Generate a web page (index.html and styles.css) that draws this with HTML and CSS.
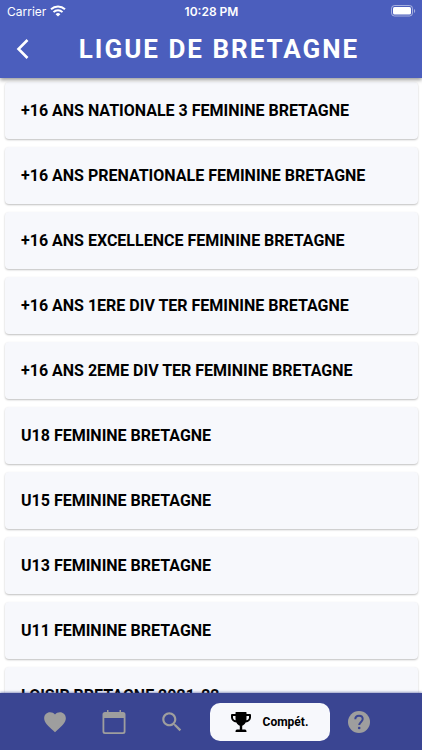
FILE: index.html
```html
<!DOCTYPE html>
<html lang="fr">
<head>
    <meta charset="UTF-8">
    <meta name="viewport" content="width=device-width, initial-scale=1.0">
    <title>Ligue de Bretagne</title>
    <link rel="stylesheet" href="styles.css">
</head>
<body>
    <header class="header">
        <div class="status-bar">
            <div class="carrier">
                <span>Carrier</span>
                <svg width="16" height="12" viewBox="0 0 16 12" fill="none" stroke="#fff" stroke-width="2">
                    <path d="M1 4.3a10.2 10.2 0 0 1 14 0"/>
                    <path d="M3.5 7.1a6.5 6.5 0 0 1 9 0"/>
                    <path d="M8 11.6L5.6 9.2a3.5 3.5 0 0 1 4.8 0z" fill="#fff" stroke="none"/>
                </svg>
            </div>
            <div class="time">10:28 PM</div>
            <div class="battery">
                <svg width="25" height="12" viewBox="0 0 25 12">
                    <rect x="0.5" y="0.5" width="21" height="10.5" rx="3" fill="none" stroke="#fff" stroke-opacity=".5"/>
                    <rect x="2" y="2" width="18" height="7.5" rx="1.5" fill="#fff"/>
                    <path d="M23 4v4c1.6-.8 1.6-3.2 0-4z" fill="#fff" fill-opacity=".5"/>
                </svg>
            </div>
        </div>
        <div class="title-bar">
            <button class="back" aria-label="Retour">
                <svg width="14" height="20" viewBox="0 0 14 20" fill="none" stroke="#fff" stroke-width="2.6">
                    <path d="M11.5 1L2.500 10l9 9"/>
                </svg>
            </button>
            <h1>LIGUE DE BRETAGNE</h1>
        </div>
    </header>

    <main class="list">
        <a class="card" href="#">+16 ANS NATIONALE 3 FEMININE BRETAGNE</a>
        <a class="card" href="#">+16 ANS PRENATIONALE FEMININE BRETAGNE</a>
        <a class="card" href="#">+16 ANS EXCELLENCE FEMININE BRETAGNE</a>
        <a class="card" href="#">+16 ANS 1ERE DIV TER FEMININE BRETAGNE</a>
        <a class="card" href="#">+16 ANS 2EME DIV TER FEMININE BRETAGNE</a>
        <a class="card" href="#">U18 FEMININE BRETAGNE</a>
        <a class="card" href="#">U15 FEMININE BRETAGNE</a>
        <a class="card" href="#">U13 FEMININE BRETAGNE</a>
        <a class="card" href="#">U11 FEMININE BRETAGNE</a>
        <a class="card" href="#">LOISIR BRETAGNE 2021-22</a>
    </main>

    <nav class="tabs">
        <a class="tab" href="#" aria-label="Favoris">
            <svg width="26" height="26" viewBox="0 0 24 24"><path d="M12 21.35l-1.45-1.32C5.4 15.36 2 12.28 2 8.5 2 5.42 4.42 3 7.5 3c1.74 0 3.41.81 4.5 2.09C13.09 3.81 14.76 3 16.5 3 19.58 3 22 5.42 22 8.5c0 3.78-3.4 6.86-8.55 11.54L12 21.35z"/></svg>
        </a>
        <a class="tab" href="#" aria-label="Calendrier">
            <svg width="26" height="26" viewBox="0 0 26 26"><path d="M4 3h2V1h1.5v2h11V1H20v2h2a2.5 2.5 0 0 1 2.5 2.5v17A2.5 2.5 0 0 1 22 25H4a2.5 2.5 0 0 1-2.5-2.5v-17A2.5 2.5 0 0 1 4 3zM3.3 9v13.200a1 1 0 0 0 1 1h17.400a1 1 0 0 0 1-1V9z" fill-rule="evenodd"/></svg>
        </a>
        <a class="tab" href="#" aria-label="Recherche">
            <svg width="26" height="26" viewBox="0 0 24 24"><path d="M15.5 14h-.79l-.28-.27C15.41 12.59 16 11.11 16 9.5 16 5.91 13.09 3 9.5 3S3 5.91 3 9.5 5.91 16 9.5 16c1.61 0 3.09-.59 4.23-1.57l.27.28v.79l5 4.99L20.49 19l-4.99-5zm-6 0C7.01 14 5 11.99 5 9.5S7.01 5 9.5 5 14 7.01 14 9.5 11.99 14 9.5 14z"/></svg>
        </a>
        <a class="tab tab-active" href="#">
            <svg width="20" height="20" viewBox="0 0 20 20" fill-rule="evenodd">
                <path d="M5 0h10q.5 0 .5.5V2H19q1 0 1 1v2.5c0 2.7-2.2 4.6-5.4 5-.9 1.700-2 2.700-3.400 3.200V17.500H14q1.500 0 1.500 2v.5h-11v-.5q0-2 1.500-2h2.800v-3.800C7.400 13.200 6.300 12.200 5.400 10.500 2.200 10.100 0 8.200 0 5.500V3q0-1 1-1h3.500V.5Q4.500 0 5 0zM2 4v1.500c0 1.400.9 2.400 2.600 2.800C4.500 7 4.500 5.500 4.500 4zM18 4h-2.500c0 1.500 0 3-.1 4.300C17.100 7.900 18 6.900 18 5.500z"/>
            </svg>
            <span>Compét.</span>
        </a>
        <a class="tab" href="#" aria-label="Aide">
            <svg width="22" height="22" viewBox="0 0 22 22">
                <circle cx="11" cy="11" r="11"/>
                <path class="mark" d="M7.300 8.300c0-2.300 1.600-3.500 3.700-3.500s3.700 1.300 3.700 3.300c0 2.800-3.500 2.900-3.500 6"/>
                <circle class="dot" cx="11.200" cy="17" r="1.300"/>
            </svg>
        </a>
    </nav>
</body>
</html>
```
FILE: styles.css
```css
* {
    box-sizing: border-box;
}
body {
    margin: 0;
    height: 100vh;
    display: flex;
    flex-direction: column;
    background-color: #fff;
    font-family: Roboto, sans-serif;
    overflow: hidden;
}
a {
    color: inherit;
    text-decoration: none;
}
svg {
    display: block;
}

/* header */
.header {
    flex: none;
    background-color: #4b5ebd;
    color: #fff;
    box-shadow: 0 2px 4px rgba(0, 0, 0, 0.4);
    z-index: 1;
}
.status-bar {
    display: grid;
    grid-template-columns: 1fr auto 1fr;
    align-items: center;
    height: 22px;
    padding: 0 6px 0 7px;
    font-family: Inter, sans-serif;
    font-size: 12px;
}
.carrier {
    display: flex;
    align-items: center;
    gap: 4px;
}
.time {
    font-weight: 600;
}
.battery {
    justify-self: end;
}
.title-bar {
    display: grid;
    grid-template-columns: 44px 1fr 28px;
    align-items: center;
    height: 56px;
    padding-bottom: 2px;
}
.back {
    display: flex;
    padding: 0 0 0 16px;
    border: none;
    background: none;
    cursor: pointer;
}
h1 {
    margin: 0;
    font-size: 26px;
    line-height: 32px;
    font-weight: bold;
    letter-spacing: 2px;
    text-align: center;
    white-space: nowrap;
}

/* competitions */
.list {
    flex: 1;
    min-height: 0;
    display: flex;
    flex-direction: column;
    gap: 8px;
    padding: 4px 4px 0 5px;
    overflow-y: auto;
    scrollbar-width: none;
}
.card {
    flex: none;
    padding: 19px 16px 18px;
    border-radius: 4px;
    background-color: #f7f8fc;
    box-shadow: 0 1px 2px rgba(0, 0, 0, 0.25);
    color: #000;
    font-size: 16px;
    line-height: 20px;
    font-weight: bold;
}

/* bottom tabs */
.tabs {
    flex: none;
    display: flex;
    align-items: center;
    height: 57px;
    padding: 0 34px 0 26px;
    background-color: #3a4592;
    box-shadow: 0 -1px 2px rgba(58, 69, 146, 0.5);
    z-index: 1;
}
.tab {
    flex: 1;
    display: flex;
    justify-content: center;
    align-items: center;
    fill: #9e9e9e;
}
.tab-active {
    flex: none;
    gap: 12px;
    width: 120px;
    height: 38px;
    margin-left: 8px;
    border-radius: 10px;
    background-color: #f7f8fc;
    color: #000;
    fill: #000;
    font-size: 12px;
    font-weight: bold;
}
.mark {
    fill: none;
    stroke: #3a4592;
    stroke-width: 2;
}
.dot {
    fill: #3a4592;
}
```
